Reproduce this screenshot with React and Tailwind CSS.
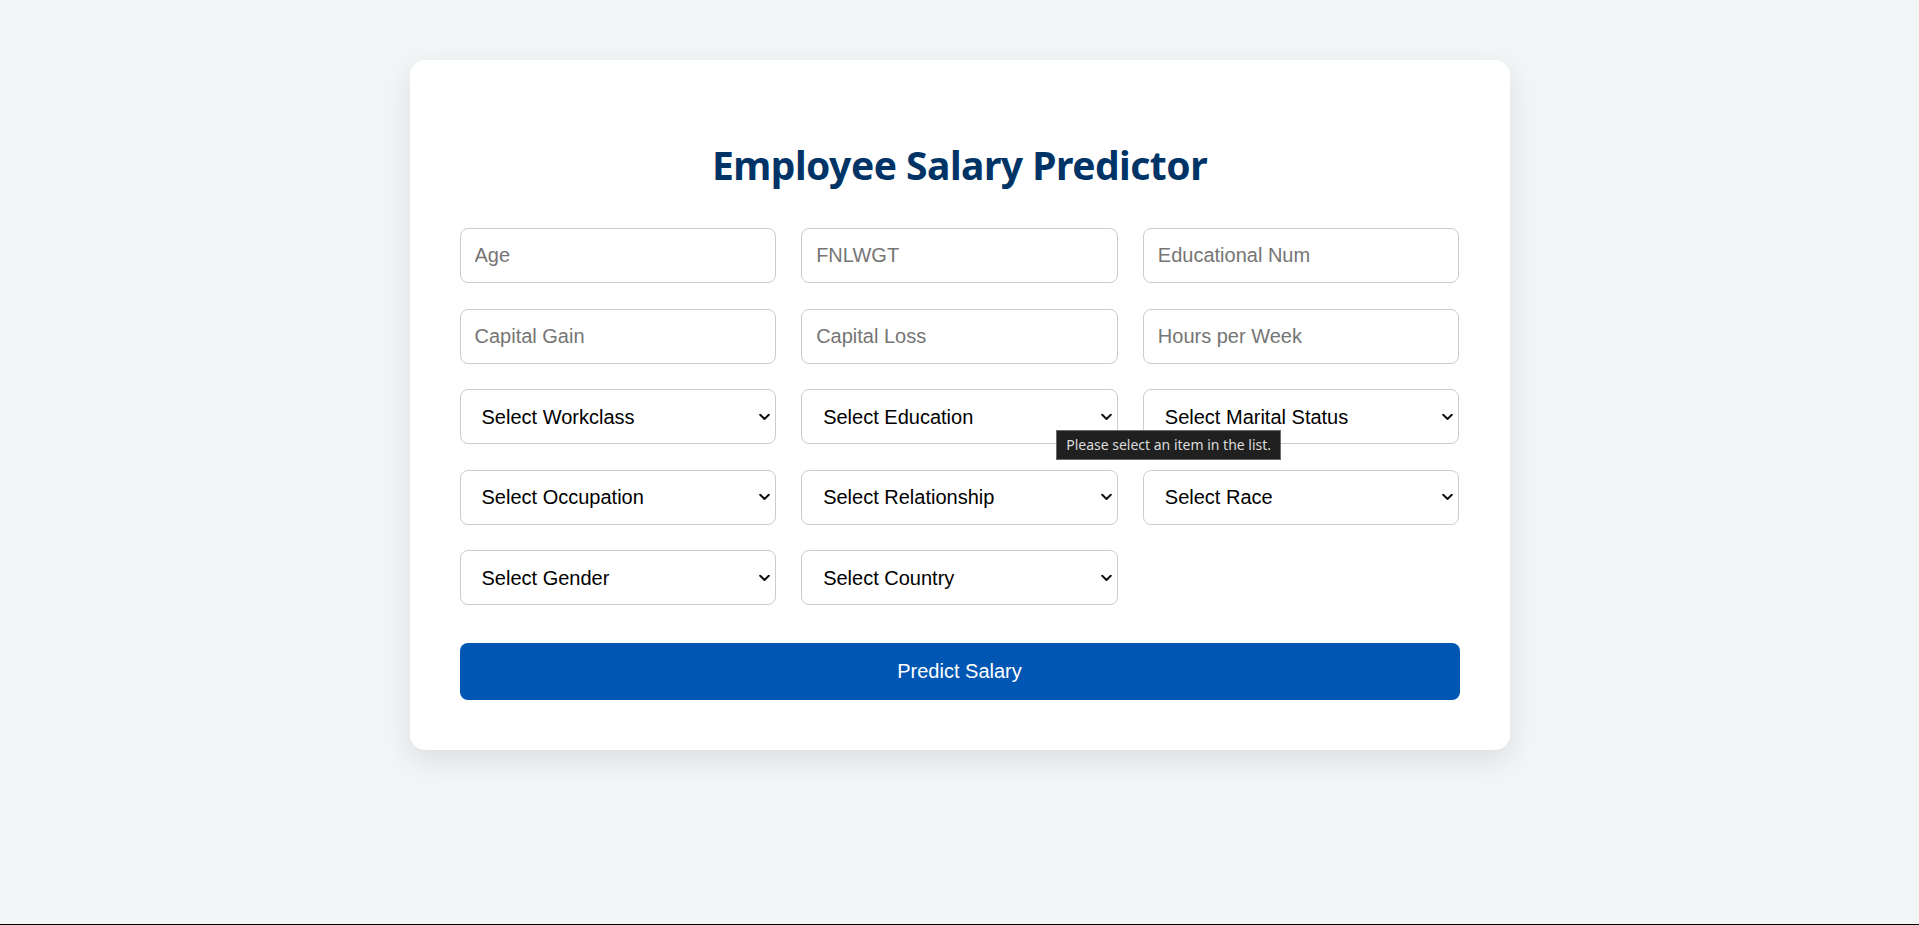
import React from "react";

const inputFields = ["Age", "FNLWGT", "Educational Num", "Capital Gain", "Capital Loss", "Hours per Week"];

const selectFields = [
  "Select Workclass",
  "Select Education",
  "Select Marital Status",
  "Select Occupation",
  "Select Relationship",
  "Select Race",
  "Select Gender",
  "Select Country",
];

const Chevron = () => (
  <svg
    className="pointer-events-none absolute right-[6px] top-1/2 -translate-y-1/2"
    width="11"
    height="7"
    viewBox="0 0 11 7"
    fill="none"
  >
    <path d="M1.2 1.2 5.5 5.5 9.8 1.2" stroke="#111" strokeWidth="2" strokeLinecap="round" strokeLinejoin="round" />
  </svg>
);

const SelectBox = ({ label, tooltip }) => (
  <div className="relative">
    <select
      defaultValue=""
      className="h-[55px] w-full appearance-none rounded-lg border border-[#ccc] bg-white pl-[21px] pr-8 font-['Liberation_Sans',Arial,sans-serif] text-[20px] leading-normal text-black outline-none"
    >
      <option value="">{label}</option>
    </select>
    <Chevron />
    {/* chrome validation bubble */}
    {tooltip && (
      <div className="absolute left-[255px] top-[41px] z-10 whitespace-nowrap border border-[#6b6b6b] bg-[#202020] px-[9px] py-[5px] font-['Noto_Sans',sans-serif] text-[14px] leading-[18px] text-[#dcdcdc]">
        Please select an item in the list.
      </div>
    )}
  </div>
);

export default function App() {
  return (
    <div className="flex h-screen flex-col bg-[#f2f6f7] font-['Liberation_Sans',Arial,sans-serif]">
      <div className="flex-1">
        <div className="mx-auto mt-[60px] w-[1100px] rounded-[15px] bg-white px-[50px] pb-[50px] pt-[50px] shadow-[0_10px_30px_rgba(0,0,0,0.1)]">
          <h1 className="mb-[44px] mt-[35px] text-center font-['Noto_Sans',sans-serif] text-[39px] font-bold leading-none tracking-[-0.5px] text-[#003366]">
            Employee Salary Predictor
          </h1>

          <form className="grid grid-cols-3 gap-x-[25px] gap-y-[25.5px]">
            {inputFields.map((f) => (
              <input
                key={f}
                type="text"
                placeholder={f}
                className="h-[55px] w-full rounded-lg border border-[#ccc] bg-white px-[14px] font-['Liberation_Sans',Arial,sans-serif] text-[20px] text-black outline-none placeholder:text-[#757575]"
              />
            ))}
            {selectFields.map((s) => (
              <SelectBox key={s} label={s} tooltip={s === "Select Education"} />
            ))}
          </form>

          <button className="mt-[37.5px] h-[57px] w-full rounded-lg bg-[#0056b3] text-[20px] text-white">
            Predict Salary
          </button>
        </div>
      </div>
      <div className="h-px bg-black" />
    </div>
  );
}
